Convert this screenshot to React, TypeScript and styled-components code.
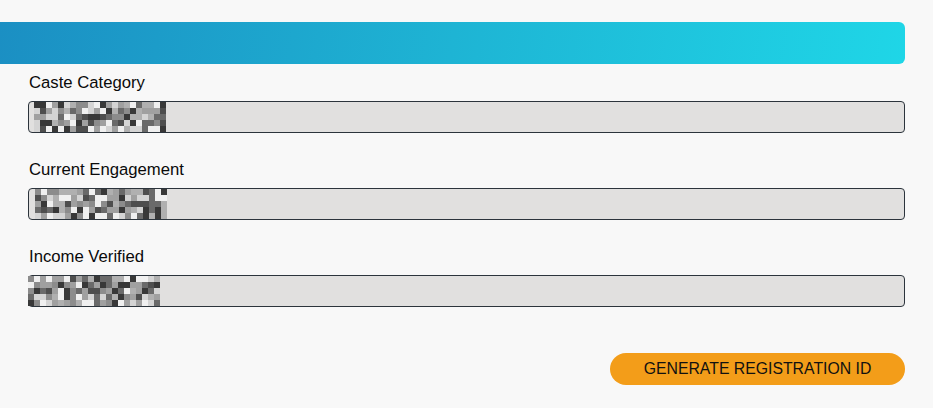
import styled, { createGlobalStyle } from 'styled-components';

// registration form tail: masked fields and the generate button

const GlobalStyle = createGlobalStyle`
  html, body {
    margin: 0;
    padding: 0;
    background: #f8f8f8;
    font-family: 'Liberation Sans', Arial, sans-serif;
  }
`;

const GREYS = ['#f0f0f0', '#d4d4d4', '#b0b0b0', '#a0a0a0', '#8c8c8c', '#6a6a6a', '#4e4e4e', '#383838'];

const makeMosaic = (seed: number, cols = 22, rows = 5) => {
  let s = seed;
  const out: string[] = [];
  for (let i = 0; i < cols * rows; i++) {
    s = (s * 9301 + 49297) % 233280;
    out.push(GREYS[Math.floor((s / 233280) * GREYS.length)]);
  }
  return out;
};

const fields = [
  { label: 'Caste Category', seed: 17, offset: 6 },
  { label: 'Current Engagement', seed: 83, offset: 7 },
  { label: 'Income Verified', seed: 211, offset: 0 },
];

export default function App() {
  return (
    <>
      <GlobalStyle />
      <Page>
        <HeaderBar />
        <Form>
          {fields.map((f) => (
            <Field key={f.label}>
              <Label>{f.label}</Label>
              <MaskedInput>
                <Mosaic $offset={f.offset}>
                  {makeMosaic(f.seed).map((c, i) => (
                    <Cell key={i} style={{ background: c }} />
                  ))}
                </Mosaic>
              </MaskedInput>
            </Field>
          ))}
          <Actions>
            <GenerateButton type="button">GENERATE REGISTRATION ID</GenerateButton>
          </Actions>
        </Form>
      </Page>
    </>
  );
}

const Page = styled.div`
  width: 905px;
  padding-top: 22px;
  min-height: 386px;
`;

const HeaderBar = styled.div`
  height: 42px;
  border-radius: 0 6px 6px 0;
  background: linear-gradient(100deg, #1b8fc3 0%, #1eb4d4 50%, #1fd6e7 100%);
`;

const Form = styled.div`
  display: flex;
  flex-direction: column;
  gap: 28px;
  padding: 10px 0 0 28px;
`;

const Field = styled.div`
  display: flex;
  flex-direction: column;
  gap: 9px;
`;

const Label = styled.label`
  font-size: 16.7px;
  line-height: 18px;
  color: #0a0a0a;
  padding-left: 1px;
`;

const MaskedInput = styled.div`
  position: relative;
  height: 30px;
  border: 1px solid #2c343c;
  border-radius: 4px;
  background: #e1e0df;
`;

const Mosaic = styled.div<{ $offset: number }>`
  position: absolute;
  top: 0;
  left: ${(p) => p.$offset - 1}px;
  display: grid;
  grid-template-columns: repeat(22, 6px);
  grid-auto-rows: 6px;
`;

const Cell = styled.span`
  display: block;
`;

const Actions = styled.div`
  display: flex;
  justify-content: flex-end;
  padding-top: 18px;
`;

const GenerateButton = styled.button`
  width: 295px;
  height: 32px;
  border: none;
  border-radius: 16px;
  background: #f39d19;
  color: #111;
  font-family: 'Liberation Sans', Arial, sans-serif;
  font-size: 15.8px;
  cursor: pointer;
`;
